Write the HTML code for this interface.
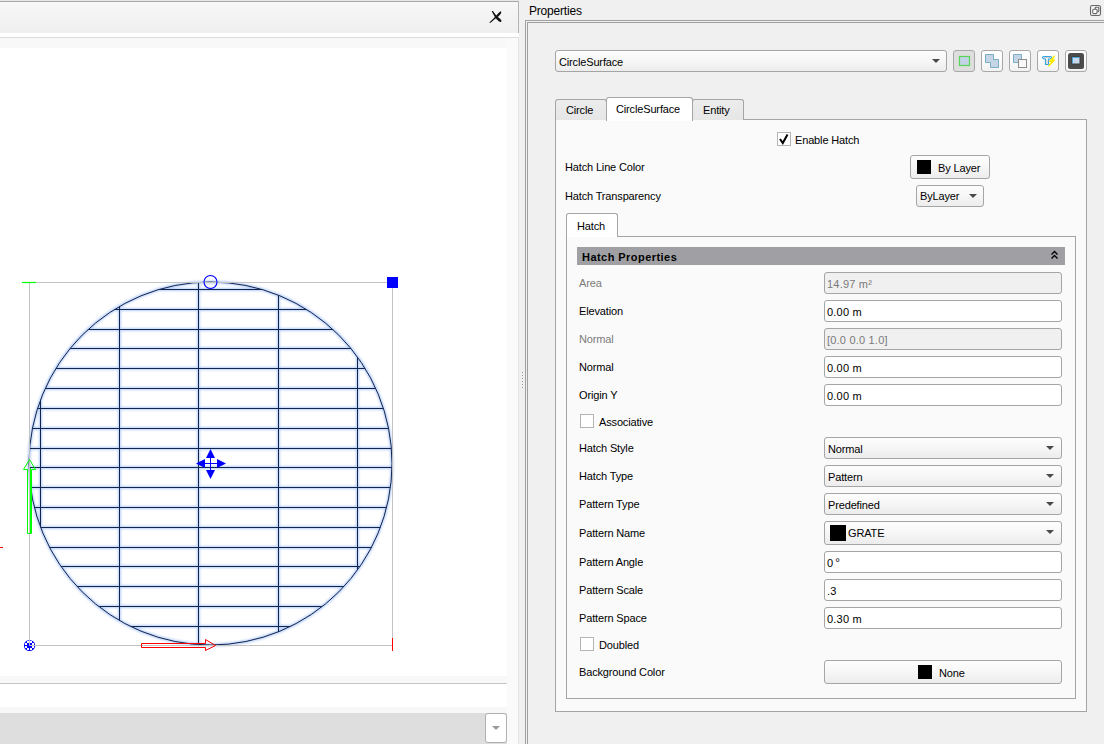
<!DOCTYPE html><html><head><meta charset="utf-8"><style>
*{margin:0;padding:0;box-sizing:border-box}
html,body{width:1104px;height:744px;overflow:hidden;background:#f0f0f0;font-family:"Liberation Sans",sans-serif}
.t{position:absolute;white-space:nowrap;font-size:11px;line-height:13px;letter-spacing:-0.15px;color:#000}
.v{letter-spacing:0.2px}
.g{color:#7a7a7a}
.b{font-weight:bold;letter-spacing:0.45px}
.fld{position:absolute;border:1px solid #a5a5a5;border-radius:3px;background:#fff}
.dis{background:#f0f0f0}
.cmb{position:absolute;border:1px solid #a5a5a5;border-radius:3px;background:linear-gradient(#fdfdfd,#f7f7f7 45%,#ececec)}
.arr{position:absolute;width:0;height:0;border-left:4px solid transparent;border-right:4px solid transparent;border-top:4px solid #4a4a4a}
.cb{position:absolute;width:14px;height:14px;border:1px solid #b4b4b4;background:#fff}
.sw{position:absolute;background:#000}
</style></head><body><div style="position:absolute;left:0px;top:0px;width:519px;height:1px;background:#e6e6e6"></div>
<div style="position:absolute;left:0px;top:1px;width:519px;height:1px;background:#a9a9a9"></div>
<div style="position:absolute;left:0px;top:2px;width:518px;height:31px;background:linear-gradient(#f7f7f7,#efefef)"></div>
<div style="position:absolute;left:518px;top:1px;width:1px;height:32px;background:#b4b4b4;border-top-right-radius:3px"></div>
<div style="position:absolute;left:0px;top:33px;width:519px;height:4px;background:#fff"></div>
<div style="position:absolute;left:0px;top:37px;width:518px;height:1px;background:#dcdcdc"></div>
<div style="position:absolute;left:0px;top:38px;width:518px;height:10px;background:#f8f8f8"></div>
<div style="position:absolute;left:0px;top:48px;width:507px;height:628px;background:#fff"></div>
<div style="position:absolute;left:507px;top:38px;width:11px;height:706px;background:#fafafa"></div>
<div style="position:absolute;left:518px;top:37px;width:1px;height:707px;background:#e4e4e4"></div>
<div style="position:absolute;left:0px;top:676px;width:507px;height:7px;background:#f8f8f8"></div>
<div style="position:absolute;left:0px;top:683px;width:507px;height:1px;background:#c4c4c4"></div>
<div style="position:absolute;left:0px;top:684px;width:507px;height:23px;background:#fff"></div>
<div style="position:absolute;left:0px;top:707px;width:507px;height:6px;background:#f8f8f8"></div>
<div style="position:absolute;left:0px;top:713px;width:507px;height:31px;background:#dedede"></div>
<div style="position:absolute;left:485px;top:713px;width:22px;height:30px;border:1px solid #b0b0b0;border-radius:3px;background:#fff"></div>
<div class="arr" style="left:492px;top:726px;border-top-color:#9a9a9a;border-left-width:4px;border-right-width:4px;border-top-width:4px"></div>
<svg style="position:absolute;left:0;top:0" width="519" height="40">
<path d="M489.3 22.6L493.5 18.6L496.5 15.3Q499 12 500.6 11.2Q501.8 11.6 501 13.6Q499.5 16 496.8 17.6L493.5 20.2L490.2 22.9Z" fill="#111"/>
<path d="M492 10.9L492.9 11.1L496.2 15.4Q498.8 17.6 500.6 19.2Q502 20.8 501.3 21.8Q500.2 22.3 498.5 21Q496.5 19.2 495 17.2L491.8 11.6Z" fill="#111"/>
</svg>
<svg style="position:absolute;left:0;top:0" width="507" height="676" shape-rendering="auto"><defs><filter id="bl" x="-10%" y="-10%" width="120%" height="120%"><feGaussianBlur stdDeviation="1.2"/></filter><clipPath id="cc"><circle cx="210.5" cy="463.5" r="181.5"/></clipPath></defs><g filter="url(#bl)"><g clip-path="url(#cc)" stroke="#b8cff8" stroke-width="3" fill="none"><path d="M0 289.5H507M0 309.5H507M0 329.5H507M0 348.5H507M0 368.5H507M0 388.5H507M0 408.5H507M0 428.5H507M0 448.5H507M0 467.5H507M0 487.5H507M0 507.5H507M0 527.5H507M0 547.5H507M0 566.5H507M0 586.5H507M0 606.5H507M0 626.5H507M40.5 0V676M119.5 0V676M198.5 0V676M278.5 0V676M357.5 0V676"/></g><circle cx="210.5" cy="463.5" r="181.5" stroke="#b8cff8" stroke-width="3" fill="none"/></g><g clip-path="url(#cc)" stroke="#12254f" stroke-width="1" fill="none"><path d="M0 289.5H507M0 309.5H507M0 329.5H507M0 348.5H507M0 368.5H507M0 388.5H507M0 408.5H507M0 428.5H507M0 448.5H507M0 467.5H507M0 487.5H507M0 507.5H507M0 527.5H507M0 547.5H507M0 566.5H507M0 586.5H507M0 606.5H507M0 626.5H507M40.5 0V676M119.5 0V676M198.5 0V676M278.5 0V676M357.5 0V676"/></g><circle cx="210.5" cy="463.5" r="181.5" stroke="#12254f" stroke-width="1" fill="none"/><g stroke="#c3c3c3" stroke-width="1" fill="none"><path d="M29 282.5H392M29.5 282V645M392.5 282V645M29 645.5H392"/></g><path d="M22 282.5H36" stroke="#00ff00" stroke-width="1.2"/><circle cx="210.5" cy="282" r="6.5" stroke="#0000ff" stroke-width="1.1" fill="none"/><rect x="387" y="277" width="11" height="11" fill="#0000ff"/><path d="M27.5 533.5V469.5H23.5L29.5 459.5L35.5 469.5H31.5V533.5Z" stroke="#00ff00" stroke-width="1" fill="none"/><path d="M30.5 533V468" stroke="#00ff00" stroke-width="1"/><path d="M141.5 643.5H205.5V639.5L215.5 645.5L205.5 650.5V647.5H141.5Z" stroke="#ff0000" stroke-width="1" fill="none"/><path d="M0 547.5H3M392.5 638V651" stroke="#ff0000" stroke-width="1"/><g fill="#0000ff"><path d="M210.5 449L215 458H206Z"/><path d="M210.5 479L215 470H206Z"/><path d="M196 463.5L205 459V468Z"/><path d="M226 463.5L217 459V468Z"/><path d="M210 457H211V470H210ZM204 463H217V464H204Z"/></g><circle cx="29.5" cy="645.5" r="5.6" fill="#0000ff"/><g fill="#fff"><rect x="27" y="641" width="2" height="2"/><rect x="30" y="641" width="2" height="2"/><rect x="25" y="643" width="2" height="2"/><rect x="32" y="643" width="2" height="2"/><rect x="25" y="646" width="2" height="2"/><rect x="32" y="646" width="2" height="2"/><rect x="27" y="648" width="2" height="2"/><rect x="30" y="648" width="2" height="2"/></g><path d="M29.5 637V645.5H40" stroke="#c3c3c3" stroke-width="1" fill="none"/></svg>
<div style="position:absolute;left:522px;top:372px;width:1px;height:1px;background:#a0a0a0"></div>
<div style="position:absolute;left:522px;top:375px;width:1px;height:1px;background:#a0a0a0"></div>
<div style="position:absolute;left:522px;top:378px;width:1px;height:1px;background:#a0a0a0"></div>
<div style="position:absolute;left:522px;top:381px;width:1px;height:1px;background:#a0a0a0"></div>
<div style="position:absolute;left:522px;top:384px;width:1px;height:1px;background:#a0a0a0"></div>
<div style="position:absolute;left:522px;top:387px;width:1px;height:1px;background:#a0a0a0"></div>
<div class="t" style="left:529px;top:5px;font-size:12px;letter-spacing:-0.2px">Properties</div>
<svg style="position:absolute;left:1089px;top:4px" width="14" height="14"><rect x="1.5" y="1.5" width="10" height="10" rx="1.8" fill="none" stroke="#676767" stroke-width="1.1"/><path d="M6.2 5V4.2Q6.2 3.3 7 3.3H8.8Q9.8 3.3 9.8 4.2V6.8Q9.8 7.6 8.9 7.6H8.3" fill="none" stroke="#676767" stroke-width="1.1"/><rect x="3.7" y="5.2" width="4.4" height="4.4" rx="1.4" fill="#fff" stroke="#676767" stroke-width="1.1"/></svg>
<div style="position:absolute;left:525px;top:20px;width:600px;height:730px;border:1px solid #a0a0a0"></div>
<div style="position:absolute;left:527px;top:22px;width:600px;height:730px;border:1px solid #a0a0a0"></div>
<div class="cmb" style="left:555px;top:50px;width:392px;height:22px"></div>
<div class="t" style="left:559px;top:56px;">CircleSurface</div>
<div class="arr" style="left:932px;top:59px"></div>
<div style="position:absolute;left:953px;top:50px;width:22px;height:22px;border:1px solid #a8a8a8;border-radius:3px;background:#dedede"></div>
<div style="position:absolute;left:981px;top:50px;width:22px;height:22px;border:1px solid #a8a8a8;border-radius:3px;background:linear-gradient(#ffffff,#fbfbfb 50%,#f1f1f1)"></div>
<div style="position:absolute;left:1009px;top:50px;width:22px;height:22px;border:1px solid #a8a8a8;border-radius:3px;background:linear-gradient(#ffffff,#fbfbfb 50%,#f1f1f1)"></div>
<div style="position:absolute;left:1037px;top:50px;width:22px;height:22px;border:1px solid #a8a8a8;border-radius:3px;background:linear-gradient(#ffffff,#fbfbfb 50%,#f1f1f1)"></div>
<div style="position:absolute;left:1065px;top:50px;width:22px;height:22px;border:1px solid #a8a8a8;border-radius:3px;background:linear-gradient(#ffffff,#fbfbfb 50%,#f1f1f1)"></div>
<svg style="position:absolute;left:950px;top:48px" width="140" height="26">
<rect x="9.5" y="8.5" width="10" height="9" fill="#c5d3e8" stroke="#55d655" stroke-width="1.2"/>
<path d="M35.5 6.5H43.5V11.5H48.5V19.5H40.5V14.5H35.5Z" fill="#c5d5e5" stroke="#78aec4"/>
<path d="M63.5 6.5H71.5V11.5H68.5V14.5H63.5Z" fill="#c5d5e5" stroke="#78aec4"/>
<rect x="68.5" y="11.5" width="8" height="8" fill="#f8f8f8" stroke="#8c8c8c"/>
<path d="M92.5 9.5Q92.5 8.5 93.5 8.5H100.5Q101.5 8.5 101.5 9.5Q101.5 10.5 99.5 11H98.5V16.5H95.5V11H94.5Q92.5 10.5 92.5 9.5Z" fill="#fff" stroke="#3aa4e0" stroke-width="1.2"/>
<path d="M94 9.6H100M97 11.5V16" stroke="#c8c8c8" stroke-width="1"/>
<path d="M104.5 8L99.5 13.5H102L98.8 18L104.5 12H102.2Z" fill="#ffea00" stroke="#ffea00" stroke-width="1.2" stroke-linejoin="round"/>
<rect x="118" y="5" width="16" height="16" rx="2.5" fill="#4b4b4b"/>
<rect x="121.5" y="8.5" width="9" height="8" fill="#3c3c3c"/>
<rect x="122.5" y="9.5" width="7" height="6" fill="#c5d8ec"/>
<path d="M122.5 15.5V9.5H129.5" stroke="#4aa6dc" stroke-width="1" fill="none"/>
</svg>
<div style="position:absolute;left:555px;top:119px;width:532px;height:593px;border:1px solid #a5a5a5;background:#fafafa"></div>
<div style="position:absolute;left:555px;top:99px;width:52px;height:21px;border:1px solid #a5a5a5;border-bottom:none;border-radius:3px 3px 0 0;background:linear-gradient(#ececec,#e6e6e6)"></div>
<div style="position:absolute;left:692px;top:99px;width:52px;height:21px;border:1px solid #a5a5a5;border-bottom:none;border-radius:3px 3px 0 0;background:linear-gradient(#ececec,#e6e6e6)"></div>
<div style="position:absolute;left:606px;top:97px;width:87px;height:24px;border:1px solid #a5a5a5;border-bottom:none;border-radius:3px 3px 0 0;background:#fff"></div>
<div class="t" style="left:566px;top:104px;">Circle</div>
<div class="t" style="left:616px;top:103px;">CircleSurface</div>
<div class="t" style="left:703px;top:104px;">Entity</div>
<div class="cb" style="left:777px;top:132px"></div>
<svg style="position:absolute;left:777px;top:132px" width="14" height="14"><path d="M3 7L5.8 11L10.5 2.5" stroke="#000" stroke-width="2" fill="none"/></svg>
<div class="t" style="left:795px;top:134px;">Enable Hatch</div>
<div class="t" style="left:565px;top:161px;">Hatch Line Color</div>
<div class="cmb" style="left:910px;top:155px;width:80px;height:24px"></div>
<div style="position:absolute;left:917px;top:160px;width:14px;height:14px;background:#000"></div>
<div class="t" style="left:938px;top:162px;">By Layer</div>
<div class="t" style="left:565px;top:190px;">Hatch Transparency</div>
<div class="cmb" style="left:916px;top:185px;width:68px;height:22px"></div>
<div class="t" style="left:920px;top:190px;">ByLayer</div>
<div class="arr" style="left:969px;top:194px"></div>
<div style="position:absolute;left:566px;top:236px;width:510px;height:463px;border:1px solid #a5a5a5;background:#fafafa"></div>
<div style="position:absolute;left:566px;top:213px;width:52px;height:24px;border:1px solid #a5a5a5;border-bottom:none;border-radius:3px 3px 0 0;background:#fff"></div>
<div class="t" style="left:577px;top:220px;">Hatch</div>
<div style="position:absolute;left:577px;top:247px;width:488px;height:18px;background:#a0a0a4"></div>
<div class="t b" style="left:582px;top:251px;">Hatch Properties</div>
<svg style="position:absolute;left:1050px;top:249px" width="10" height="12"><path d="M1.5 5.5L4.5 2.5L7.5 5.5M1.5 9.5L4.5 6.5L7.5 9.5" stroke="#000" stroke-width="1.4" fill="none"/></svg>
<div class="t g" style="left:579px;top:277px;">Area</div>
<div class="fld dis" style="left:824px;top:272px;width:238px;height:22px"></div>
<div class="t v g" style="left:827px;top:278px;">14.97 m²</div>
<div class="t" style="left:579px;top:305px;">Elevation</div>
<div class="fld" style="left:824px;top:300px;width:238px;height:22px"></div>
<div class="t v" style="left:827px;top:306px;">0.00 m</div>
<div class="t g" style="left:579px;top:333px;">Normal</div>
<div class="fld dis" style="left:824px;top:328px;width:238px;height:22px"></div>
<div class="t v g" style="left:827px;top:334px;">[0.0 0.0 1.0]</div>
<div class="t" style="left:579px;top:361px;">Normal</div>
<div class="fld" style="left:824px;top:356px;width:238px;height:22px"></div>
<div class="t v" style="left:827px;top:362px;">0.00 m</div>
<div class="t" style="left:579px;top:389px;">Origin Y</div>
<div class="fld" style="left:824px;top:384px;width:238px;height:22px"></div>
<div class="t v" style="left:827px;top:390px;">0.00 m</div>
<div class="cb" style="left:580px;top:414px"></div>
<div class="t" style="left:599px;top:416px;">Associative</div>
<div class="t" style="left:579px;top:442px;">Hatch Style</div>
<div class="cmb" style="left:824px;top:437px;width:238px;height:22px"></div>
<div class="arr" style="left:1046px;top:446px"></div>
<div class="t" style="left:828px;top:443px;">Normal</div>
<div class="t" style="left:579px;top:470px;">Hatch Type</div>
<div class="cmb" style="left:824px;top:465px;width:238px;height:22px"></div>
<div class="arr" style="left:1046px;top:474px"></div>
<div class="t" style="left:828px;top:471px;">Pattern</div>
<div class="t" style="left:579px;top:498px;">Pattern Type</div>
<div class="cmb" style="left:824px;top:493px;width:238px;height:22px"></div>
<div class="arr" style="left:1046px;top:502px"></div>
<div class="t" style="left:828px;top:499px;">Predefined</div>
<div class="t" style="left:579px;top:527px;">Pattern Name</div>
<div class="cmb" style="left:824px;top:521px;width:238px;height:24px"></div>
<div class="arr" style="left:1046px;top:530px"></div>
<div style="position:absolute;left:830px;top:525px;width:16px;height:16px;background:#000"></div>
<div class="t" style="left:848px;top:527px;">GRATE</div>
<div class="t" style="left:579px;top:556px;">Pattern Angle</div>
<div class="fld" style="left:824px;top:551px;width:238px;height:22px"></div>
<div class="t v" style="left:827px;top:557px;">0<span style='margin-left:2px;font-size:12px'>°</span></div>
<div class="t" style="left:579px;top:584px;">Pattern Scale</div>
<div class="fld" style="left:824px;top:579px;width:238px;height:22px"></div>
<div class="t v" style="left:827px;top:585px;">.3</div>
<div class="t" style="left:579px;top:612px;">Pattern Space</div>
<div class="fld" style="left:824px;top:607px;width:238px;height:22px"></div>
<div class="t v" style="left:827px;top:613px;">0.30 m</div>
<div class="cb" style="left:580px;top:637px"></div>
<div class="t" style="left:599px;top:639px;">Doubled</div>
<div class="t" style="left:579px;top:666px;">Background Color</div>
<div class="cmb" style="left:824px;top:660px;width:238px;height:24px"></div>
<div style="position:absolute;left:918px;top:665px;width:14px;height:14px;background:#000"></div>
<div class="t" style="left:939px;top:667px;">None</div></body></html>
